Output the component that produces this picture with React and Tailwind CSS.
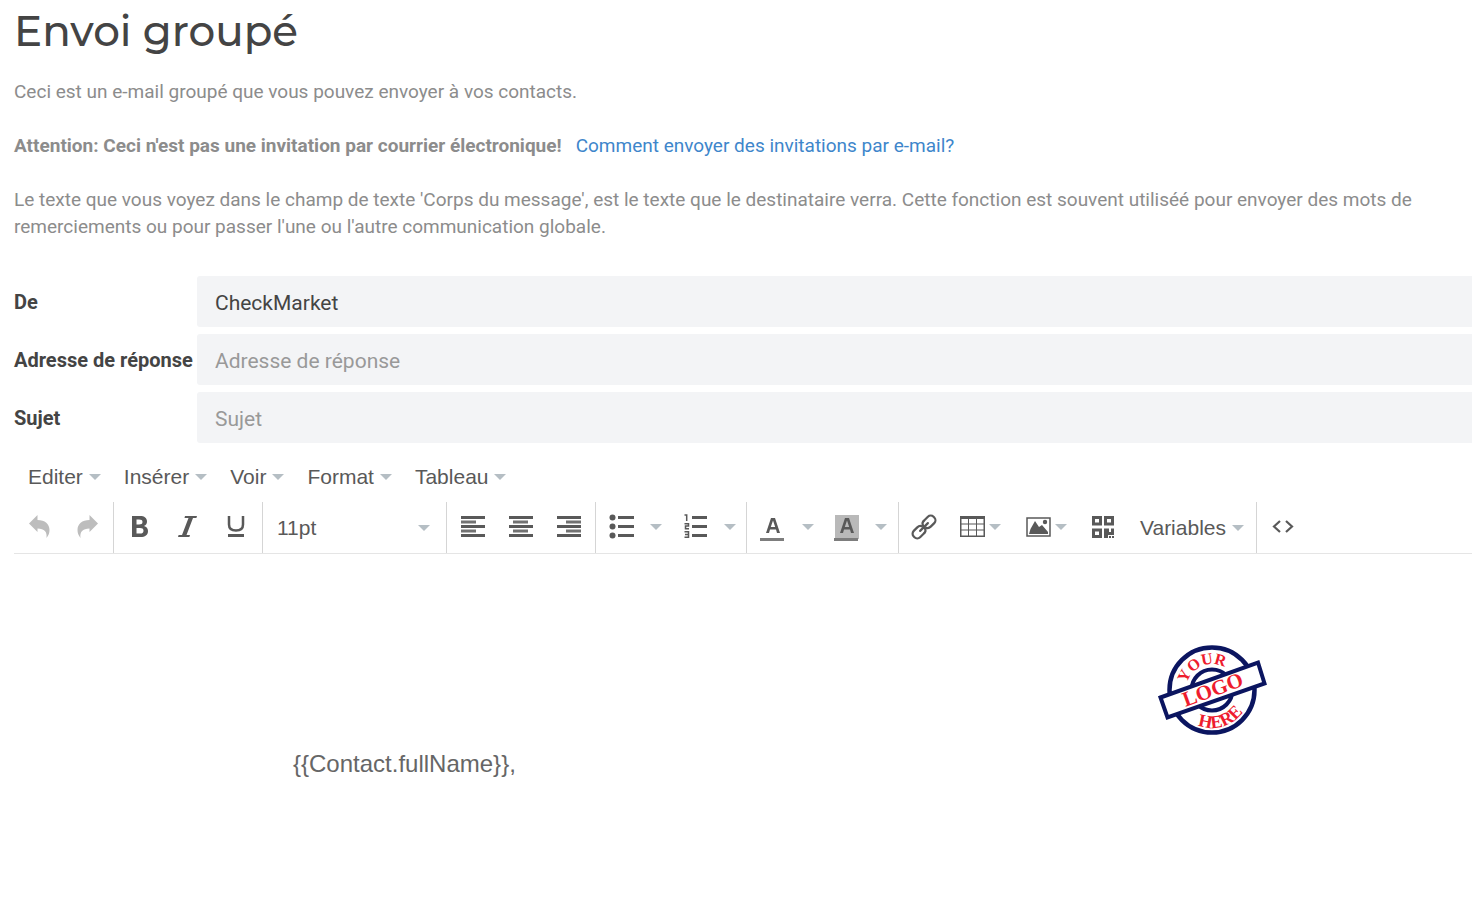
const MENUS = ['Editer', 'Insérer', 'Voir', 'Format', 'Tableau'];

const FIELDS = [
  { id: 'from', label: 'De', value: 'CheckMarket' },
  { id: 'reply', label: 'Adresse de réponse', placeholder: 'Adresse de réponse' },
  { id: 'subject', label: 'Sujet', placeholder: 'Sujet' },
];

function Caret() {
  return (
    <svg width="12" height="6" viewBox="0 0 12 6" className="shrink-0" fill="#b5bec4" aria-hidden="true">
      <path d="M0 0h12L6 6z" />
    </svg>
  );
}

function Group({ children, last }) {
  return (
    <div className={`flex h-[51px] shrink-0 items-center ${last ? '' : 'border-r border-[#d5d5d5]'}`}>
      {children}
    </div>
  );
}

function ToolButton({ label, className = 'w-12', children }) {
  return (
    <button type="button" aria-label={label} className={`flex h-12 shrink-0 items-center justify-center pb-px ${className}`}>
      {children}
    </button>
  );
}

function Icon({ children, fill = '#595959' }) {
  return (
    <svg width="26" height="28" viewBox="0 0 26 28" className="shrink-0" fill={fill} aria-hidden="true">
      {children}
    </svg>
  );
}

function AlignIcon({ x }) {
  return (
    <Icon>
      <path d="M1 3h24v3H1zM1 12h24v3H1zM1 21h24v3H1z" />
      <path d={`M${x} 7.500h15v3h-15zM${x} 16.500h15v3h-15z`} opacity="0.85" />
    </Icon>
  );
}

function ArrowShape() {
  return <path d="M3 10.500 11.500 2v5C19 7 23.500 11 23.500 17c0 3-1 5.500-3 8 .8-6-2-9.500-9-9.500V19z" />;
}

function QrIcon() {
  return (
    <Icon>
      <path fillRule="evenodd" d="M2 3h10v9.500H2zM5 6v3.500h4V6zM14 3h10v9.500H14zM17 6v3.500h4V6zM2 15.500h10V25H2zM5 18.500V22h4v-3.500z" />
      <path d="M14 15.500h5V19h2v-3.500h3v6.500h-6v3h-4zM19 23h2v2h-2zM22 23h2v2h-2z" />
    </Icon>
  );
}

function StampLogo() {
  return (
    <svg width="112" height="94" viewBox="0 0 112 94" role="img" aria-label="Your logo here">
      <g fill="none" stroke="#0b1560">
        <circle cx="55" cy="47" r="42.500" strokeWidth="4.500" />
        <circle cx="55" cy="47" r="20.500" strokeWidth="4" />
      </g>
      <path d="M3.500 54.500 101 19.500 107.500 40.500 10.500 74.500z" fill="#fff" stroke="#0b1560" strokeWidth="4" />
      <defs>
        <path id="stamp-top" d="M29 47A26 26 0 0 1 81 47" />
        <path id="stamp-bottom" d="M17 47A38 38 0 0 0 93 47" />
      </defs>
      <g fill="#ee1c2e" fontFamily="Liberation Serif, serif" fontWeight="700" textAnchor="middle">
        <text fontSize="16">
          <textPath href="#stamp-top" startOffset="37%">YOUR</textPath>
        </text>
        <text fontSize="18">
          <textPath href="#stamp-bottom" startOffset="59%">HERE</textPath>
        </text>
        <text x="58" y="53" fontSize="21" transform="rotate(-20 58 53)">LOGO</text>
      </g>
    </svg>
  );
}

function MenuBar() {
  return (
    <div className="flex h-[51px] items-center gap-[23px] pl-[14px]">
      {MENUS.map((name) => (
        <button key={name} type="button" className="flex items-center gap-[6px]">
          {name}
          <Caret />
        </button>
      ))}
    </div>
  );
}

function Toolbar() {
  return (
    <div className="flex overflow-hidden border-b border-[#e5e5e5]">
      <Group>
        <div className="flex pl-px pr-[2px]">
          <ToolButton label="Annuler">
            <Icon fill="#bdbdbd"><ArrowShape /></Icon>
          </ToolButton>
          <ToolButton label="Rétablir">
            <Icon fill="#bdbdbd"><g transform="translate(27 0) scale(-1 1)"><ArrowShape /></g></Icon>
          </ToolButton>
        </div>
      </Group>

      <Group>
        <div className="flex pl-px pr-[3px]">
          <ToolButton label="Gras">
            <Icon>
              <path fillRule="evenodd" d="M6 3h8c4.500 0 7 2 7 5.500 0 2.200-1 3.700-3 4.500 2.500.8 4 2.500 4 5 0 4-3 6-7.500 6H6zM10.500 6.500v5H13c2.200 0 3.500-.7 3.500-2.500S15.300 6.500 13 6.500zM10.500 15v5.500H14c2.200 0 3.500-.8 3.500-2.800S16.200 15 14 15z" />
            </Icon>
          </ToolButton>
          <ToolButton label="Italique">
            <Icon>
              <path d="M11 3h12l-.6 2H19l-6.500 17H16l-.6 2H4l.6-2H8l6.500-17h-4z" />
            </Icon>
          </ToolButton>
          <ToolButton label="Souligné">
            <Icon>
              <path d="M7 3v8.500c0 4 2.500 6 7 6s7-2 7-6V3" fill="none" stroke="#595959" strokeWidth="2.500" />
              <path d="M6 21h16v3H6z" />
            </Icon>
          </ToolButton>
        </div>
      </Group>

      <Group>
        <button type="button" className="flex h-12 w-[183px] items-center justify-between pl-[14px] pr-4">
          11pt
          <Caret />
        </button>
      </Group>

      <Group>
        <div className="flex px-[2px]">
          <ToolButton label="Aligner à gauche"><AlignIcon x={1} /></ToolButton>
          <ToolButton label="Centrer"><AlignIcon x={5} /></ToolButton>
          <ToolButton label="Aligner à droite"><AlignIcon x={10} /></ToolButton>
        </div>
      </Group>

      <Group>
        <div className="flex pl-[2px] pr-[6px]">
          <ToolButton label="Liste à puces">
            <Icon>
              <circle cx="3.500" cy="4.500" r="3" />
              <circle cx="3.500" cy="13.500" r="3" />
              <circle cx="3.500" cy="22.500" r="3" />
              <path d="M9 3h16v3H9zM9 12h16v3H9zM9 21h16v3H9z" />
            </Icon>
          </ToolButton>
          <ToolButton label="Style de puces" className="w-5"><Caret /></ToolButton>
          <ToolButton label="Liste numérotée" className="ml-[6px] w-12">
            <Icon>
              <path d="M1.500 2h2.200v6M1.500 10.700h4v2.400h-3v2.700H6M1.500 18.700h4v5.600h-4M2 21.500h3.500" fill="none" stroke="#595959" strokeWidth="1.500" />
              <path d="M9 3h15v3H9zM9 12h15v3H9zM9 21h15v3H9z" />
            </Icon>
          </ToolButton>
          <ToolButton label="Style de numéros" className="w-5"><Caret /></ToolButton>
        </div>
      </Group>

      <Group>
        <div className="flex pl-px pr-[6px]">
          <ToolButton label="Couleur du texte">
            <Icon>
              <path fillRule="evenodd" d="m7 20 5-15h4l5 15h-3l-1-3.500h-6L10 20zm4.800-6h4.400L14 7.500z" />
              <path d="M1 25h24v3H1z" fill="#7d7d7d" />
            </Icon>
          </ToolButton>
          <ToolButton label="Choisir la couleur du texte" className="w-6"><Caret /></ToolButton>
          <ToolButton label="Couleur de fond" className="ml-[2px] w-12">
            <Icon>
              <path d="M2 2h24v24H2z" fill="#b9b9b9" />
              <path fillRule="evenodd" d="m7 20 5-15h4l5 15h-3l-1-3.500h-6L10 20zm4.800-6h4.400L14 7.500z" />
              <path d="M1 25h24v3H1z" fill="#7d7d7d" />
            </Icon>
          </ToolButton>
          <ToolButton label="Choisir la couleur de fond" className="w-[22px]"><Caret /></ToolButton>
        </div>
      </Group>

      <Group>
        <ToolButton label="Lien" className="ml-px w-12">
          <Icon>
            <g fill="none" stroke="#595959" strokeWidth="2.200" strokeLinecap="round" transform="rotate(-45 13 14)">
              <path d="M9 18.500H3a4 4 0 0 1-4-4v-1a4 4 0 0 1 4-4h5c2 0 3.500 1 4 2.500M17 9.500h6a4 4 0 0 1 4 4v1a4 4 0 0 1-4 4h-5c-2 0-3.500-1-4-2.500" />
              <path d="M7.500 14h11M9 18.500c1.500 0 3-1 3.500-2.500M17 9.500c-1.500 0-3 1-3.500 2.500" />
            </g>
          </Icon>
        </ToolButton>
        <ToolButton label="Tableau" className="ml-[2px] w-[60px] gap-1">
          <Icon>
            <path fillRule="evenodd" d="M1 3h25v21H1zM2.500 6v4.500H9V6zM10 6v4.500h7V6zM18 6v4.500h6.500V6zM2.500 11.500v5H9v-5zM10 11.500v5h7v-5zM18 11.500v5h6.500v-5zM2.500 17.500v5H9v-5zM10 17.500v5h7v-5zM18 17.500v5h6.500v-5z" />
          </Icon>
          <Caret />
        </ToolButton>
        <ToolButton label="Image" className="ml-[6px] w-[60px] gap-1">
          <Icon>
            <path d="M2 5h23v18H2z" fill="none" stroke="#595959" strokeWidth="1.500" />
            <path d="m4 21 1.500-5 4.500-8 4 6 3-2 6 7v2z" />
            <circle cx="20" cy="9" r="2.200" />
          </Icon>
          <Caret />
        </ToolButton>
        <ToolButton label="Code QR" className="ml-[3px] w-12"><QrIcon /></ToolButton>
        <button type="button" className="ml-[13px] mr-3 flex h-12 items-center gap-[6px]">
          Variables
          <Caret />
        </button>
      </Group>

      <Group last>
        <ToolButton label="Code source" className="ml-[2px] w-12">
          <Icon>
            <path d="m10 8-6 5.500 6 5.500M16 8l6 5.500-6 5.500" fill="none" stroke="#595959" strokeWidth="2.200" />
          </Icon>
        </ToolButton>
      </Group>
    </div>
  );
}

export default function App() {
  return (
    <main className="bg-white pl-[14px] font-['Roboto',sans-serif] text-[#444]">
      <h1 className="pt-1 font-['Montserrat','Inter',sans-serif] text-[42px] leading-[54px] font-medium">
        Envoi groupé
      </h1>

      <div className="mt-5 space-y-[27px] pr-4 text-[19px] leading-[27px] text-[#8c8c8c]">
        <p>Ceci est un e-mail groupé que vous pouvez envoyer à vos contacts.</p>
        <p>
          <strong className="font-bold">Attention: Ceci n'est pas une invitation par courrier électronique!</strong>
          <a href="#invitations" className="ml-[14px] text-[#3e86cb]">Comment envoyer des invitations par e-mail?</a>
        </p>
        <p>
          Le texte que vous voyez dans le champ de texte 'Corps du message', est le texte que le destinataire verra.
          Cette fonction est souvent utiliséé pour envoyer des mots de remerciements ou pour passer l'une ou l'autre
          communication globale.
        </p>
      </div>

      <form className="mt-9 space-y-[7px]">
        {FIELDS.map((field) => (
          <div key={field.id} className="flex items-center">
            <label htmlFor={field.id} className="w-[183px] shrink-0 text-[20px] font-bold">{field.label}</label>
            <input
              id={field.id}
              type="text"
              defaultValue={field.value}
              placeholder={field.placeholder}
              className="h-[51px] min-w-0 flex-1 rounded-l-[3px] bg-[#f3f4f6] px-[18px] pt-[2px] text-[21px] outline-none placeholder:text-[#999]"
            />
          </div>
        ))}
      </form>

      <section className="mt-2 font-['Liberation_Sans',Arial,sans-serif] text-[21px] text-[#595959]">
        <MenuBar />
        <Toolbar />
        <div className="ml-[279px] max-w-[976px] pt-[89px] pb-28 text-[24px] leading-8 text-[#666]">
          <div className="flex justify-end">
            <StampLogo />
          </div>
          <p className="mt-[11px]">{'{{Contact.fullName}},'}</p>
        </div>
      </section>
    </main>
  );
}
